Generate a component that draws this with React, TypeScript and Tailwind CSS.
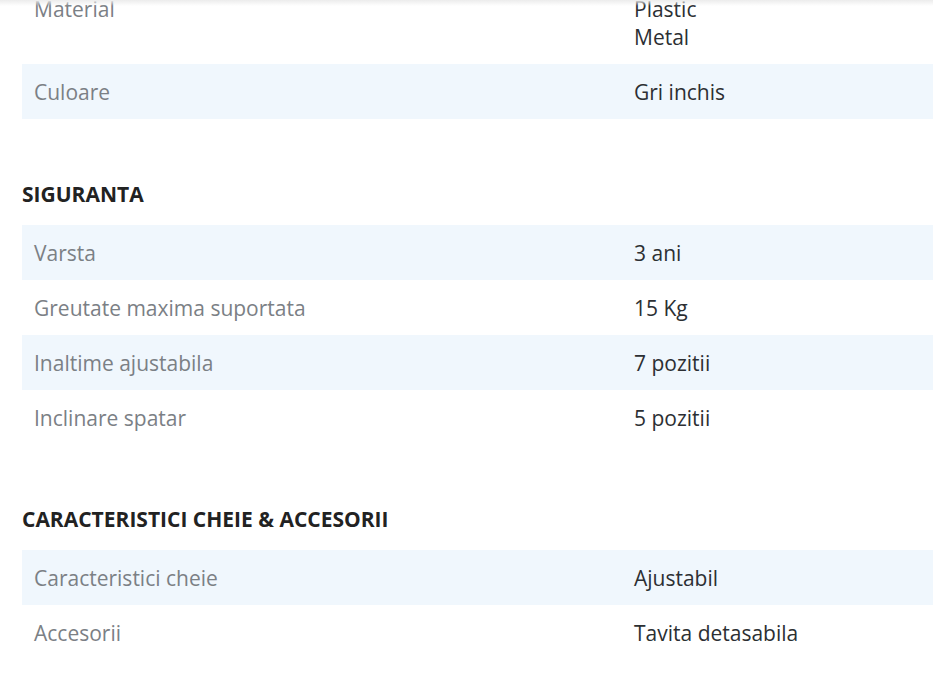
import React from "react";

type Row = { label: string; values: string[] };

const Table = ({ rows, startShaded }: { rows: Row[]; startShaded: boolean }) => (
  <div className="flex flex-col">
    {rows.map((r, i) => {
      const shaded = startShaded ? i % 2 === 0 : i % 2 === 1;
      return (
        <div
          key={r.label}
          className={`flex pt-[14px] pb-[13px] ${shaded ? "bg-[#f0f7fd]" : "bg-white"}`}
        >
          <div className="w-[612px] pl-3 text-[#7b8085] leading-[28px]">{r.label}</div>
          <div className="flex flex-col text-[#2c2f33] leading-[28px]">
            {r.values.map((v) => (
              <div key={v}>{v}</div>
            ))}
          </div>
        </div>
      );
    })}
  </div>
);

export default function App() {
  return (
    <div
      className="relative w-[933px] h-[679px] overflow-hidden bg-white text-[21px]"
      style={{ fontFamily: '"Open Sans", sans-serif' }}
    >
      <div className="absolute top-0 left-0 right-0 h-[6px] bg-gradient-to-b from-[#ececec] to-white/0 z-10" />
      <div className="pl-[22px] mt-[-19px]">
        <Table
          startShaded={false}
          rows={[
            { label: "Material", values: ["Plastic", "Metal"] },
            { label: "Culoare", values: ["Gri inchis"] },
          ]}
        />
        <h3 className="mt-[61px] mb-[17px] font-bold text-[#222] leading-[28px]">SIGURANTA</h3>
        <Table
          startShaded={true}
          rows={[
            { label: "Varsta", values: ["3 ani"] },
            { label: "Greutate maxima suportata", values: ["15 Kg"] },
            { label: "Inaltime ajustabila", values: ["7 pozitii"] },
            { label: "Inclinare spatar", values: ["5 pozitii"] },
          ]}
        />
        <h3 className="mt-[60px] mb-[17px] font-bold text-[#222] leading-[28px]">
          CARACTERISTICI CHEIE &amp; ACCESORII
        </h3>
        <Table
          startShaded={true}
          rows={[
            { label: "Caracteristici cheie", values: ["Ajustabil"] },
            { label: "Accesorii", values: ["Tavita detasabila"] },
          ]}
        />
      </div>
    </div>
  );
}
